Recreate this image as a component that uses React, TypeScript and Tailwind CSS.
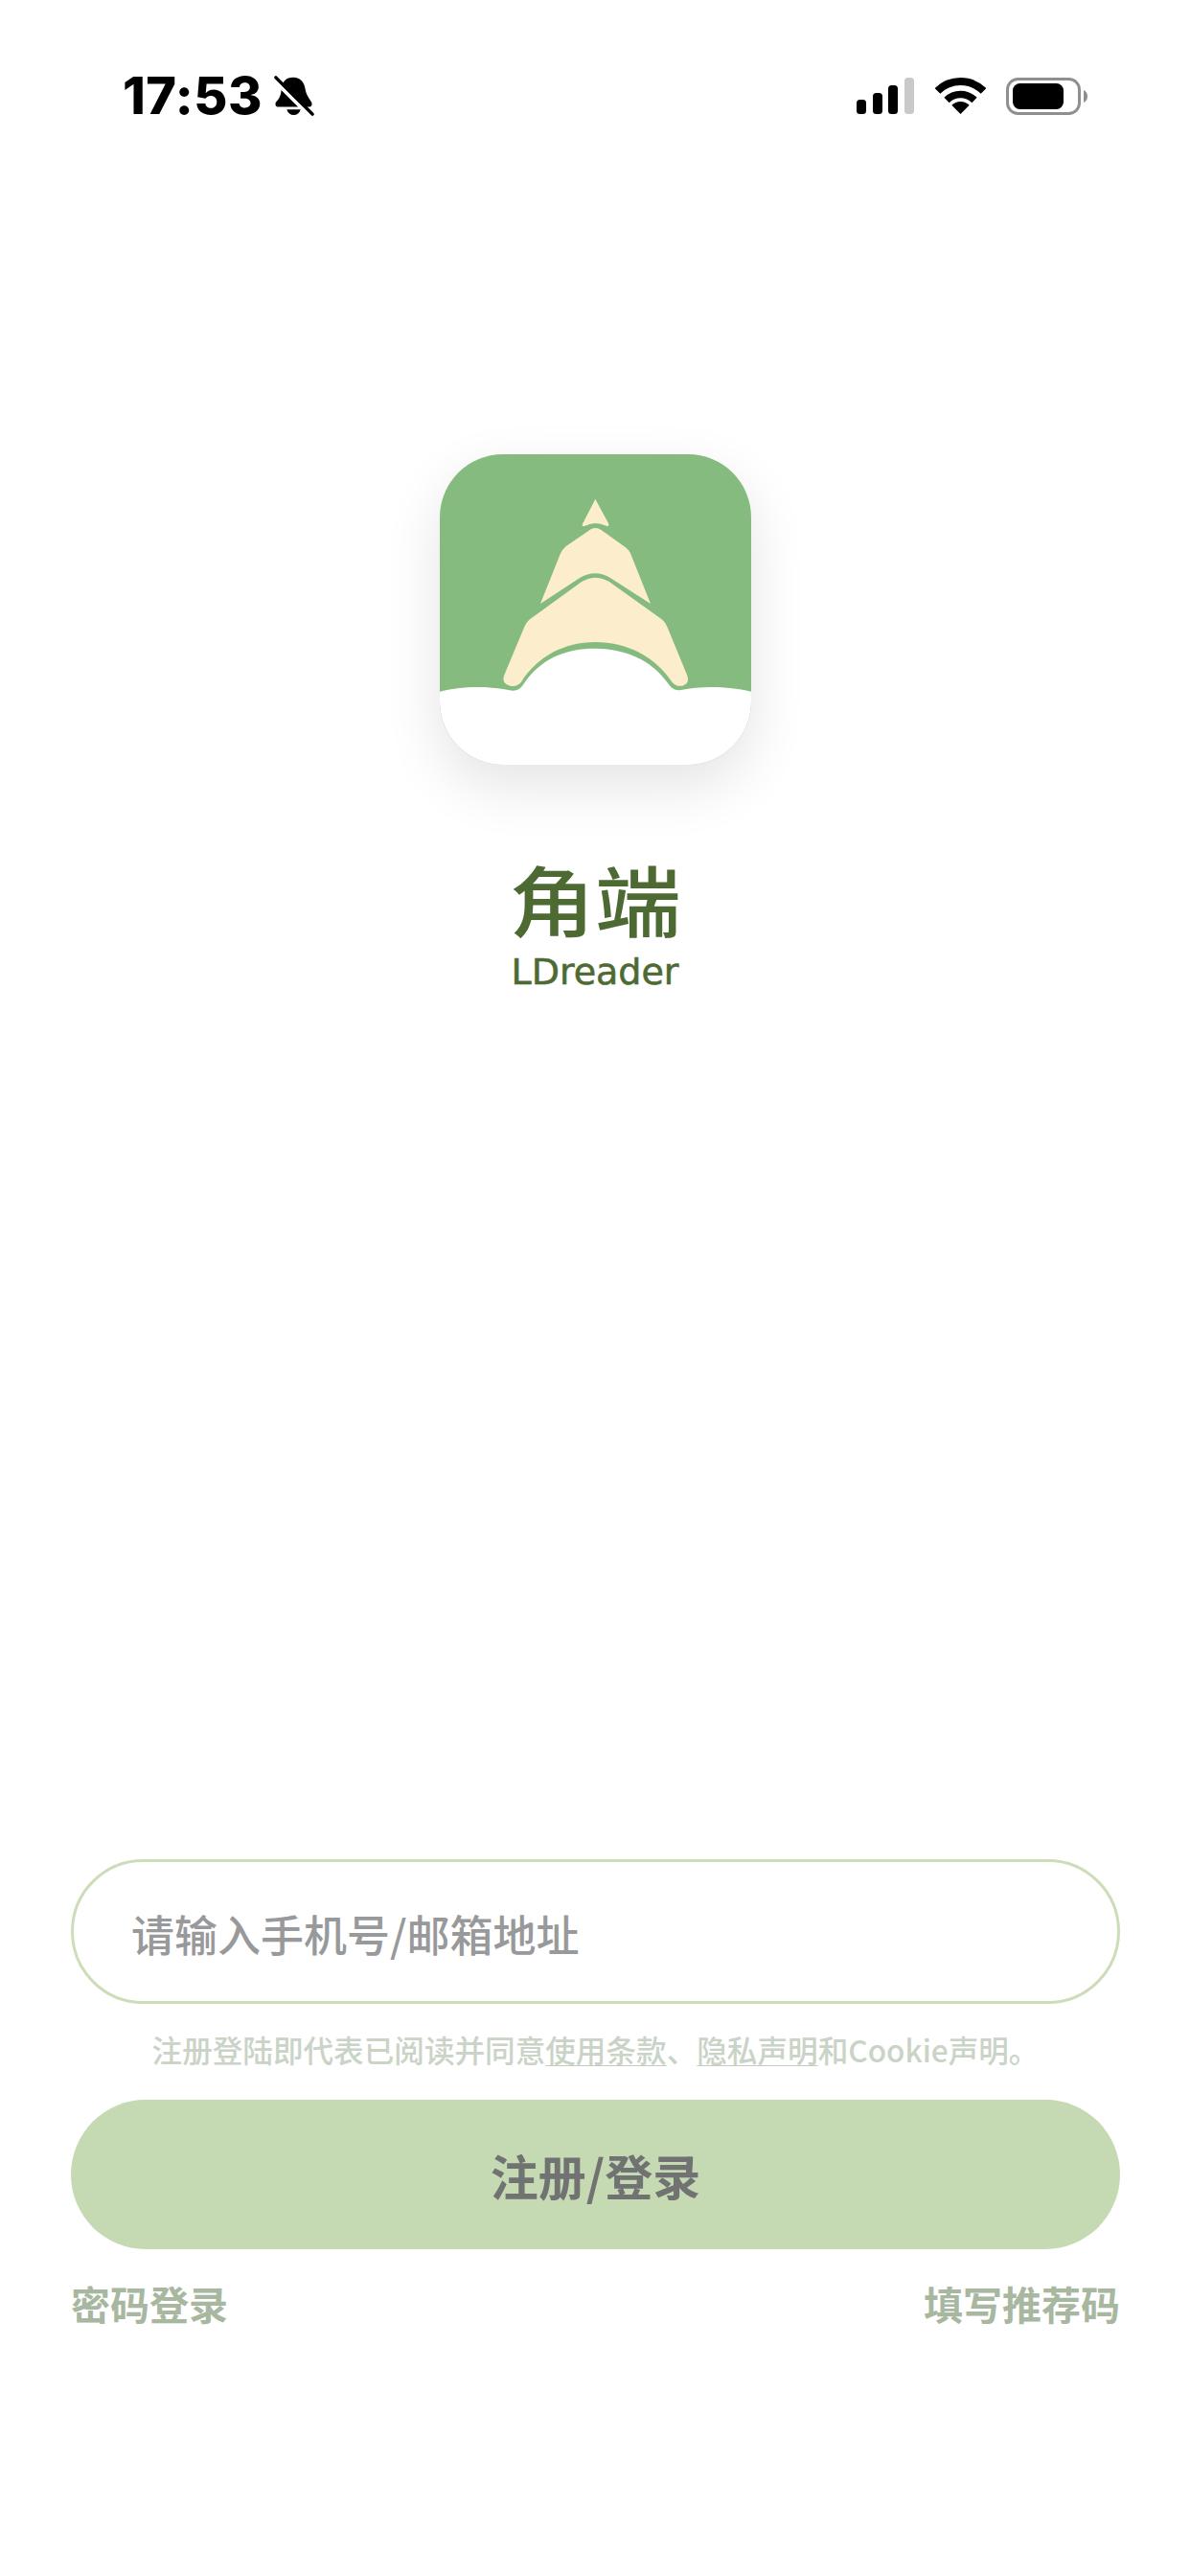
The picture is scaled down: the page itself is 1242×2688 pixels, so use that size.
function BellOffIcon() {
  return (
    <svg width="44" height="44" viewBox="0 0 44 46" className="ml-[11px]">
      <path d="M21 3C29 3 33 9 34 15C35 22 39 27 41 30C42 33 41 35 38 35L5 35C2 35 1 33 2 30C6 26 8 22 8 15C9 8 13 3 21 3Z" fill="#000" />
      <path d="M14 38H29C28 42 25 44 21.5 44C18 44 15 42 14 38Z" fill="#000" />
      <path d="M-1 5L39 45" stroke="#fff" strokeWidth="4" />
      <path d="M2 3L42 43" stroke="#000" strokeWidth="3.6" strokeLinecap="round" />
    </svg>
  );
}

function SignalIcon() {
  return (
    <svg width="61" height="38" viewBox="0 0 61 38">
      <rect x="0" y="23" width="10" height="15" rx="3.5" fill="#000" />
      <rect x="17" y="16" width="10" height="22" rx="3.5" fill="#000" />
      <rect x="33" y="8" width="10" height="30" rx="3.5" fill="#000" />
      <rect x="50" y="0" width="10" height="38" rx="3.5" fill="#c9c9c9" />
    </svg>
  );
}

function WifiIcon() {
  return (
    <svg width="53" height="38" viewBox="0 0 53 38" fill="none">
      <path d="M2.5 14A34 34 0 0 1 50.5 14" stroke="#000" strokeWidth="8" />
      <path d="M12 23.5A20.5 20.5 0 0 1 41 23.5" stroke="#000" strokeWidth="7.5" />
      <path d="M26.5 38L17.3 28.8A13 13 0 0 1 35.7 28.8Z" fill="#000" />
    </svg>
  );
}

function BatteryIcon() {
  return (
    <svg width="85" height="39" viewBox="0 0 85 39">
      <rect x="1.5" y="1.5" width="75" height="36" rx="11" fill="none" stroke="#8f8f8f" strokeWidth="3" />
      <rect x="7" y="6" width="53" height="27" rx="7.5" fill="#000" />
      <path d="M81 13C83.5 14 85 16.5 85 19.5C85 22.5 83.5 25 81 26Z" fill="#8f8f8f" />
    </svg>
  );
}

function AppLogo() {
  return (
    <div className="h-[324px] w-[325px] overflow-hidden rounded-[66px] bg-[#85bb7f] shadow-[0_22px_60px_rgba(0,0,0,0.11)]">
      <svg width="325" height="324" viewBox="85 72 975 972">
        <path
          d="M85 815C140 800 230 795 300 810Q330 818 345 795C400 710 480 680 572 680C660 680 750 715 800 790Q815 815 840 810C910 795 1000 800 1060 815L1060 1045L85 1045Z"
          fill="#fff"
        />
        <g fill="#fcedcd">
          <path d="M572 212L614 290Q616 300 606 296Q572 280 540 296Q528 300 532 290Z" />
          <path d="M572 303Q585 303 600 316L665 362Q680 372 686 392L745 540L620 460Q572 430 522 460L400 540L462 385Q468 370 480 360L545 316Q560 303 572 303Z" />
          <path d="M572 458Q600 458 625 478L775 585Q790 595 797 612L860 765Q868 790 845 797Q825 800 812 785C760 705 670 660 572 660C475 660 390 705 340 785Q325 802 305 797Q278 790 286 765L350 612Q357 595 372 585L520 478Q545 458 572 458Z" />
        </g>
      </svg>
    </div>
  );
}

export default function App() {
  return (
    <div className="flex h-[2688px] w-[1242px] flex-col overflow-hidden bg-white font-['Noto_Sans_CJK_SC','Noto_Sans',sans-serif]">
      <header className="flex h-[122px] items-center justify-between pl-[128px] pr-[107px] pt-[78px]">
        <div className="flex items-center">
          <span className="font-['Inter',sans-serif] text-[54px] font-extrabold leading-[44px] tracking-[0.5px] text-black">17:53</span>
          <BellOffIcon />
        </div>
        <div className="flex items-center gap-[21px]">
          <SignalIcon />
          <WifiIcon />
          <BatteryIcon />
        </div>
      </header>

      <section className="mt-[352px] flex flex-col items-center">
        <AppLogo />
        <h1 className="mt-[100px] origin-top scale-y-[0.88] text-[90px] font-medium leading-[88px] text-[#4e6a33]">角端</h1>
        <p className="mt-[7px] font-['DejaVu_Sans',sans-serif] text-[38px] leading-[42px] text-[#4e6a33] [-webkit-text-stroke:0.6px_#4e6a33]">LDreader</p>
      </section>

      <form className="mt-auto flex flex-col pl-[74px] pr-[73px] pb-[261px]">
        <div className="flex h-[151px] items-center rounded-full border-[3px] border-[#cddcb9] px-[60px] pt-[4px]">
          <input
            placeholder="请输入手机号/邮箱地址"
            className="w-full bg-transparent text-[45px] font-medium text-[#555] outline-none placeholder:text-[#98999a]"
          />
        </div>
        <p className="mt-[27px] text-center text-[31.6px] font-medium leading-[40px] text-[#c9d3c6]">
          注册登陆即代表已阅读并同意
          <span className="underline decoration-[#c2cbbf] decoration-1 underline-offset-[3px]">使用条款</span>、
          <span className="underline decoration-[#c2cbbf] decoration-1 underline-offset-[3px]">隐私声明</span>
          和Cookie声明。
        </p>
        <button type="button" className="mt-[33px] h-[156px] rounded-full bg-[#c5d9b3] text-[50px] font-bold text-[#717372]">
          注册/登录
        </button>
        <div className="mt-[32px] flex justify-between text-[41px] font-bold leading-[48px] text-[#a8b79f]">
          <span>密码登录</span>
          <span>填写推荐码</span>
        </div>
      </form>
    </div>
  );
}
